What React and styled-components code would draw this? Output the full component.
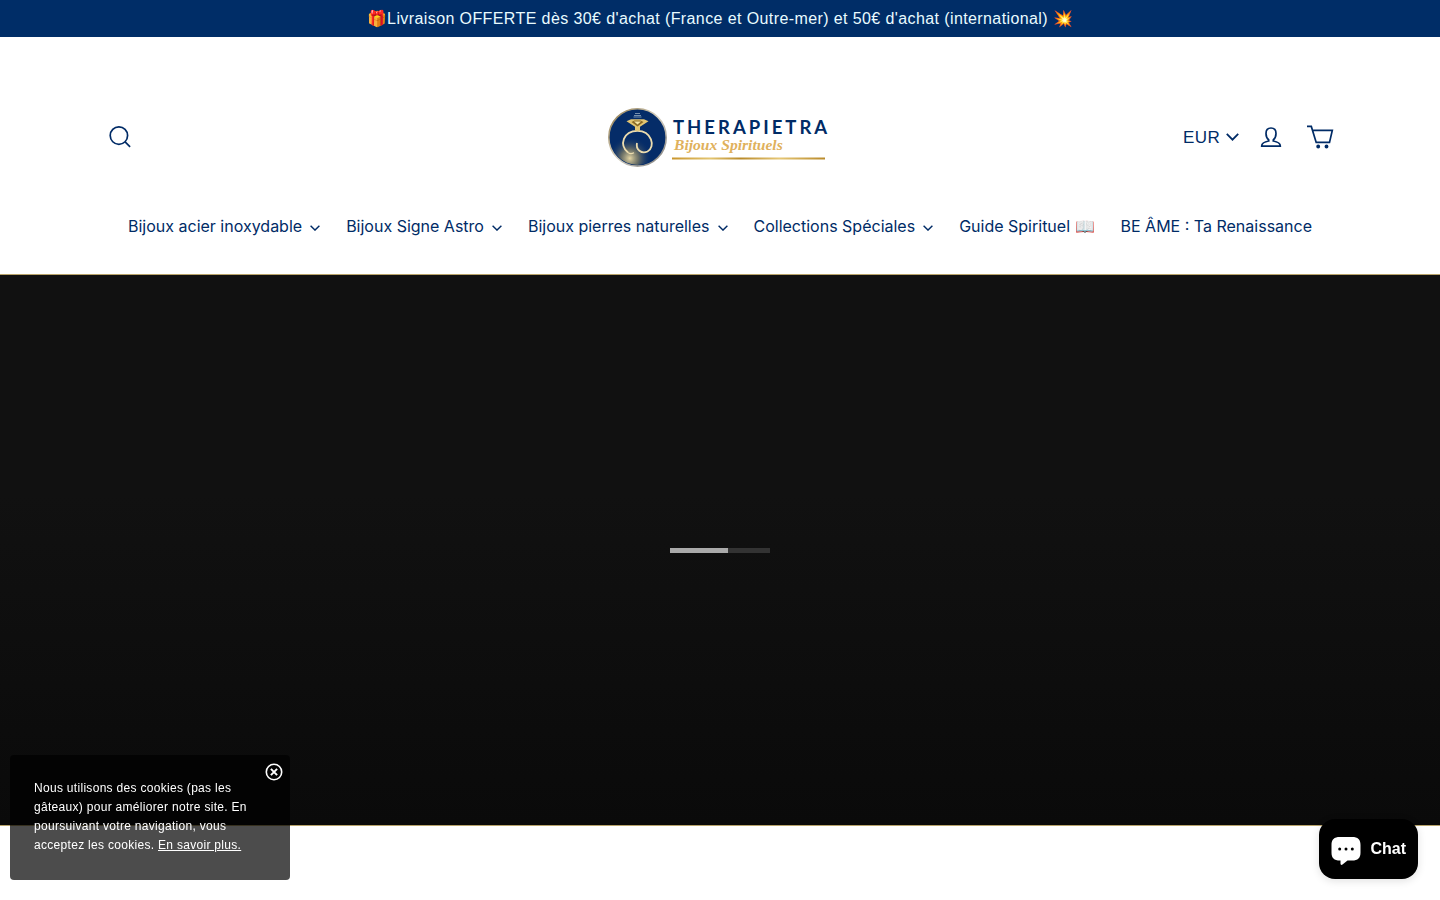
import { useState } from 'react';
import styled, { createGlobalStyle } from 'styled-components';

const GlobalStyle = createGlobalStyle`
  * {
    box-sizing: border-box;
  }
  body {
    margin: 0;
    background: #fff;
    color: #002b66;
    font-family: "Liberation Sans", Arial, sans-serif;
  }
`;

const AnnouncementBar = styled.div`
  padding: 8px 16px;
  background: #002d67;
  color: #e9fbff;
  font-size: 16px;
  line-height: 21px;
  letter-spacing: 0.025em;
  text-align: center;
`;

const StyledHeader = styled.header`
  padding: 60px 40px 32px;
  border-bottom: 1px solid #b8a36a;
`;

const HeaderWrapper = styled.div`
  width: 100%;
  max-width: 1240px;
  margin: 0 auto;
`;

const HeaderRow = styled.div`
  display: grid;
  grid-template-columns: 1fr auto 1fr;
  align-items: center;
  height: 80px;
`;

const IconLink = styled.a`
  display: flex;
  color: inherit;
`;

const SearchLink = styled(IconLink)`
  justify-self: start;
  padding: 0 6px;
`;

const LogoLink = styled.a`
  display: block;
  line-height: 0;
`;

const HeaderTools = styled.div`
  display: flex;
  align-items: center;
  justify-content: flex-end;
  padding-right: 6px;
`;

const CurrencyField = styled.label`
  display: grid;
  align-items: center;
  margin-right: 17px;

  & > select,
  & > svg {
    grid-area: 1 / 1;
  }
  & > svg {
    justify-self: end;
    pointer-events: none;
  }
`;

const CurrencySelect = styled.select`
  appearance: none;
  width: 60px;
  height: 32px;
  padding: 0 16px 0 4px;
  border: 0;
  background: transparent;
  color: inherit;
  font-family: inherit;
  font-size: 17px;
  letter-spacing: 0.025em;
`;

const ToolLinks = styled.div`
  display: flex;
  align-items: center;
  gap: 22px;
`;

const SiteNav = styled.ul`
  display: flex;
  flex-wrap: wrap;
  justify-content: center;
  gap: 0 26px;
  margin: 0;
  padding: 34px 0 1px;
  list-style: none;
`;

const NavLink = styled.a`
  display: flex;
  align-items: center;
  gap: 8px;
  color: inherit;
  font-family: Inter, "Liberation Sans", sans-serif;
  font-size: 16px;
  line-height: 30px;
  text-decoration: none;
  white-space: nowrap;

  & > svg {
    margin-top: 3px;
  }
`;

const Hero = styled.section`
  display: flex;
  align-items: center;
  justify-content: center;
  height: 551px;
  border-bottom: 1px solid #b8a36a;
  background: linear-gradient(to bottom, #111 40%, #0a0a0a 100%);
`;

const LoaderTrack = styled.div`
  width: 100px;
  height: 5px;
  background: #333;
`;

const LoaderBar = styled.div`
  height: 100%;
  background: #aaa;
`;

const CookieBox = styled.aside`
  position: fixed;
  left: 10px;
  bottom: 20px;
  width: 280px;
  padding: 24px 24px 25px;
  border-radius: 4px;
  background: rgba(0, 0, 0, 0.7);
  color: #fff;
  font-size: 12px;
  line-height: 19px;
  letter-spacing: 0.025em;

  & > p {
    margin: 0;
  }
  & a {
    color: inherit;
  }
`;

const CloseButton = styled.button`
  position: absolute;
  top: 8px;
  right: 7px;
  display: flex;
  padding: 0;
  border: 0;
  background: none;
  color: #fff;
  cursor: pointer;
`;

const ChatButton = styled.button`
  position: fixed;
  right: 22px;
  bottom: 21px;
  display: flex;
  align-items: center;
  gap: 9px;
  height: 60px;
  padding: 0 12px;
  border: 0;
  border-radius: 16px;
  background: #000;
  box-shadow: 0 2px 8px rgba(0, 0, 0, 0.12);
  color: #fff;
  font-family: inherit;
  font-size: 16px;
  font-weight: bold;
  cursor: pointer;
`;

const Chevron = ({ width = 10 }) => (
  <svg width={width} height={width * 0.6} viewBox="0 0 10 6" fill="none" stroke="currentColor" strokeWidth="1.4" aria-hidden="true">
    <path d="M0.6 0.7 5 5.1 9.4 0.7" />
  </svg>
);

const SearchIcon = () => (
  <svg width="28" height="28" viewBox="0 0 28 28" fill="none" stroke="currentColor" strokeWidth="1.7" aria-hidden="true">
    <circle cx="12.9" cy="12.6" r="8.7" />
    <path d="m19.1 18.8 5 5" />
  </svg>
);

const AccountIcon = () => (
  <svg width="28" height="28" viewBox="0 0 28 28" fill="none" stroke="currentColor" strokeWidth="1.7" aria-hidden="true">
    <path d="M15 5c-3 0-5 2.2-5 5.4 0 3 1.3 5.2 2.7 6.5V18C9.300 18.600 5.700 20 5.700 23.100h18.600c0-3.100-3.600-4.500-7-5.100v-1.100c1.400-1.300 2.700-3.500 2.700-6.500C20 7.200 18 5 15 5Z" />
  </svg>
);

const CartIcon = () => (
  <svg width="28" height="28" viewBox="0 0 28 28" fill="none" stroke="currentColor" strokeWidth="1.7" aria-hidden="true">
    <path d="M1 3.4h4.300l4.900 16h13.300L26.300 7.400H6.700" />
    <circle cx="12.2" cy="23.5" r="1.1" fill="currentColor" />
    <circle cx="20.5" cy="23.5" r="1.1" fill="currentColor" />
  </svg>
);

const CloseIcon = () => (
  <svg width="18" height="18" viewBox="0 0 18 18" fill="none" stroke="currentColor" aria-hidden="true">
    <circle cx="9" cy="9" r="7.7" strokeWidth="1.6" />
    <path d="m5.900 5.900 6.200 6.200M12.100 5.900 5.900 12.100" strokeWidth="2" />
  </svg>
);

const ChatIcon = () => (
  <svg width="30" height="32" viewBox="0 0 30 32" aria-hidden="true">
    <path fill="#fff" d="M9 4h12c6 0 8.500 2.500 8.500 8v7.500c0 5.500-2.500 8-8.500 8h-4.500l-5 4c-1 .8-2 .4-2-.9v-3.100H9c-6 0-8.500-2.500-8.500-8V12C.5 6.500 3 4 9 4Z" />
    <circle cx="8.700" cy="16" r="1.500" />
    <circle cx="15" cy="16" r="1.500" />
    <circle cx="21.300" cy="16" r="1.500" />
  </svg>
);

const Logo = () => (
  <svg width="224" height="60" viewBox="0 0 224 60" role="img" aria-label="Therapietra Bijoux Spirituels">
    <defs>
      <linearGradient id="rim" x1="0" y1="0" x2="1" y2="1">
        <stop offset="0" stopColor="#8b7442" />
        <stop offset="0.5" stopColor="#d9d3c4" />
        <stop offset="1" stopColor="#777" />
      </linearGradient>
      <linearGradient id="gold" x1="0" y1="0" x2="1" y2="0">
        <stop offset="0" stopColor="#c9952c" />
        <stop offset="0.25" stopColor="#e3c571" />
        <stop offset="0.45" stopColor="#b98a2a" />
        <stop offset="0.7" stopColor="#e6c776" />
        <stop offset="1" stopColor="#b98a2a" />
      </linearGradient>
      <radialGradient id="glow" cx="0.36" cy="0.88" r="0.4">
        <stop offset="0" stopColor="#e6d7a4" />
        <stop offset="0.4" stopColor="#8b8565" stopOpacity="0.75" />
        <stop offset="1" stopColor="#052c68" stopOpacity="0" />
      </radialGradient>
    </defs>
    <circle cx="29.5" cy="30.4" r="28.7" fill="#052c68" stroke="url(#rim)" strokeWidth="1.6" />
    <circle cx="29.5" cy="30.4" r="27.5" fill="url(#glow)" />
    {/* ring and its stone */}
    <g fill="none" stroke="#ecdcae">
      <path d="M20 45.500C11 38 15 24 29.500 23.800c14 0 18.500 16 10 20.700-6 2.800-12-2-10.500-8.500" strokeWidth="1.8" />
      <path d="M20 45.500c1.500 1.200 4 1.200 6 .2" strokeWidth="1.2" />
      <path d="M27 6.500h5M26 8.500h7M25.500 10h8" stroke="#7790ad" />
    </g>
    <path d="M18.500 14.300 23 12.200h13l4.500 2.100-8.500 5.500v4h-5v-4Z" fill="#e3c571" />
    <path d="m23.500 15 6 4.500 6-4.500-3-1.500h-6Z" fill="#8c6b25" />
    <path d="m26 14.500 3.500 3 3.500-3Z" fill="#f8e7a6" />
    <text x="65" y="27" fill="#002b66" fontFamily="Lato, sans-serif" fontSize="18.5" fontWeight="700" letterSpacing="3">THERAPIETRA</text>
    <text x="66" y="43" fill="#dfb15c" fontFamily="'Liberation Serif', serif" fontSize="15.6" fontWeight="700" fontStyle="italic">Bijoux Spirituels</text>
    <rect x="64" y="50.5" width="153" height="2" fill="url(#gold)" />
  </svg>
);

const App = () => {
  const [cookieOpen, setCookieOpen] = useState(true);

  const navItems = [
    { name: 'Bijoux acier inoxydable', hasMenu: true },
    { name: 'Bijoux Signe Astro', hasMenu: true },
    { name: 'Bijoux pierres naturelles', hasMenu: true },
    { name: 'Collections Spéciales', hasMenu: true },
    { name: 'Guide Spirituel 📖' },
    { name: 'BE ÂME : Ta Renaissance' },
  ];

  return (
    <>
      <GlobalStyle />
      <AnnouncementBar>
        🎁Livraison OFFERTE dès 30€ d'achat (France et Outre-mer) et 50€ d'achat (international) 💥
      </AnnouncementBar>
      <StyledHeader>
        <HeaderWrapper>
          <HeaderRow>
            <SearchLink href="#search" aria-label="Rechercher"><SearchIcon /></SearchLink>
            <LogoLink href="#home"><Logo /></LogoLink>
            <HeaderTools>
              <CurrencyField>
                <CurrencySelect aria-label="Devise" defaultValue="EUR">
                  <option>EUR</option>
                </CurrencySelect>
                <Chevron width={13} />
              </CurrencyField>
              <ToolLinks>
                <IconLink href="#account" aria-label="Se connecter"><AccountIcon /></IconLink>
                <IconLink href="#cart" aria-label="Panier"><CartIcon /></IconLink>
              </ToolLinks>
            </HeaderTools>
          </HeaderRow>
          <nav>
            <SiteNav>
              {navItems.map((el) => (
                <li key={el.name}>
                  <NavLink href="#menu">
                    {el.name}
                    {el.hasMenu && <Chevron />}
                  </NavLink>
                </li>
              ))}
            </SiteNav>
          </nav>
        </HeaderWrapper>
      </StyledHeader>
      <Hero>
        <LoaderTrack>
          <LoaderBar style={{ width: '58%' }} />
        </LoaderTrack>
      </Hero>
      {cookieOpen && (
        <CookieBox>
          <p>
            Nous utilisons des cookies (pas les gâteaux) pour améliorer notre site. En poursuivant votre navigation, vous acceptez les cookies. <a href="#cookies">En savoir plus.</a>
          </p>
          <CloseButton type="button" aria-label="Fermer" onClick={() => setCookieOpen(false)}><CloseIcon /></CloseButton>
        </CookieBox>
      )}
      <ChatButton type="button">
        <ChatIcon />
        Chat
      </ChatButton>
    </>
  );
};

export default App;
